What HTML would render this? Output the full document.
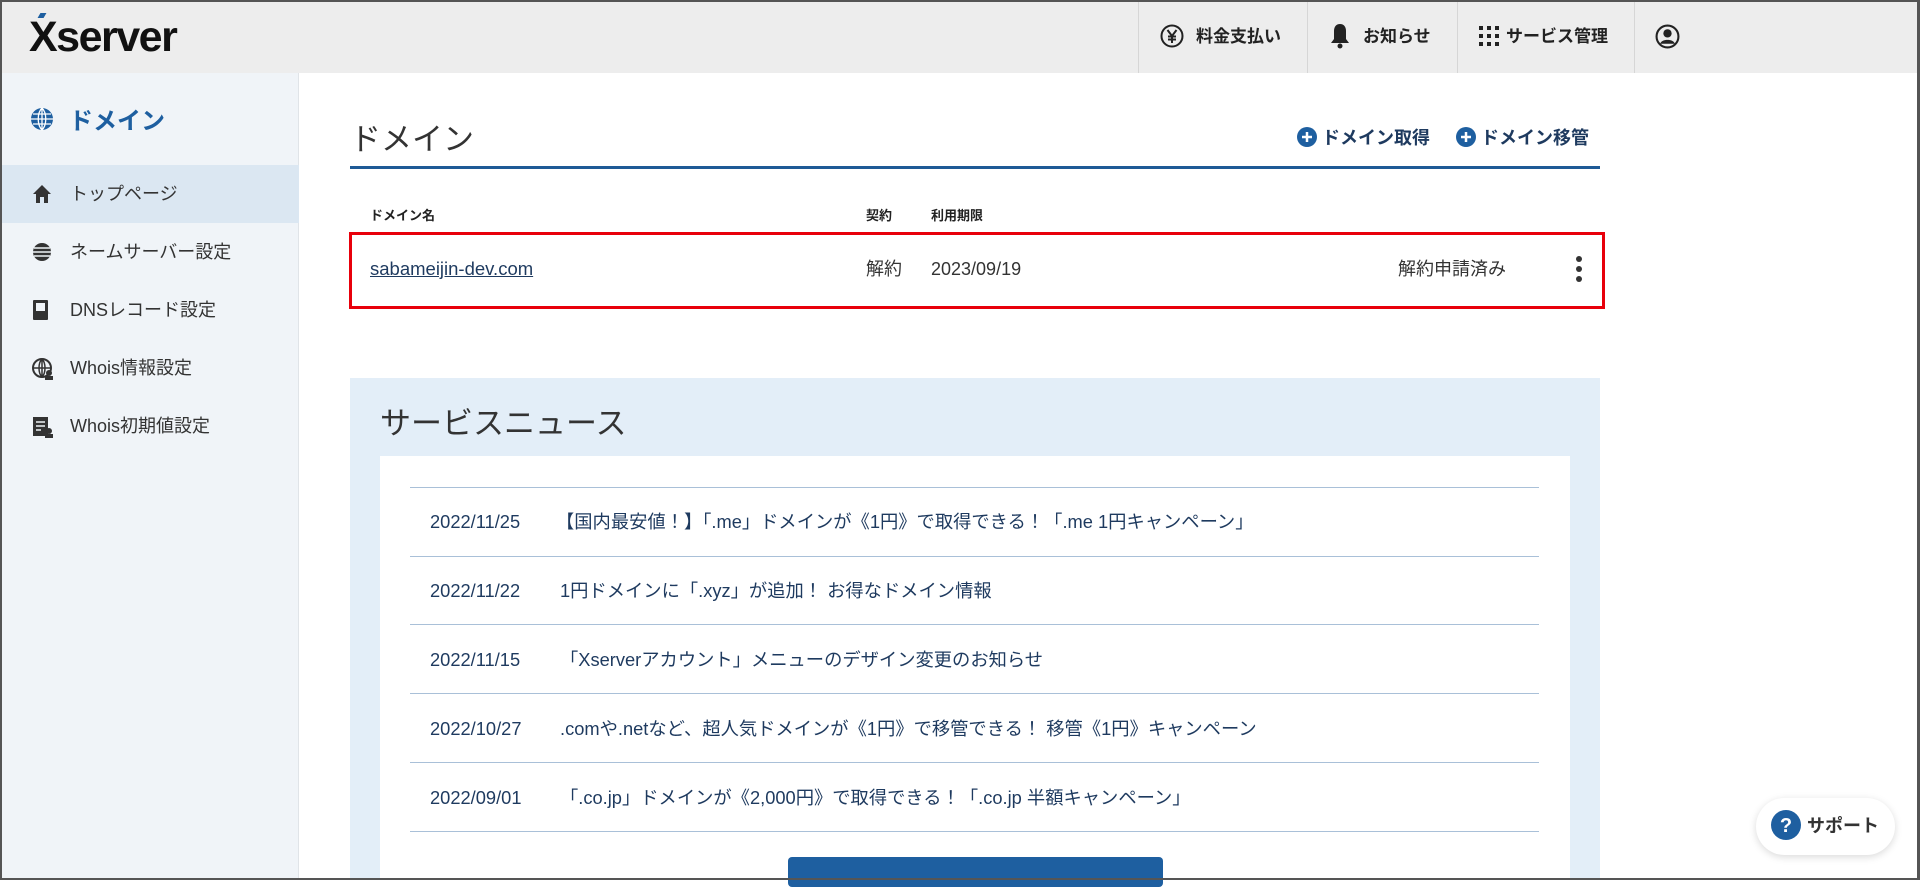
<!DOCTYPE html>
<html><head><meta charset="utf-8"><style>
*{margin:0;padding:0;box-sizing:border-box}
body{width:1920px;height:880px;overflow:hidden;background:#fff;font-family:"Liberation Sans","Noto Sans CJK JP",sans-serif;color:#333;position:relative}
.a{position:absolute;white-space:nowrap;line-height:24px}
#frame{position:absolute;left:0;top:0;width:1920px;height:880px;border:2px solid #555;border-right:3px solid #555;pointer-events:none;z-index:10}
#hdr{position:absolute;left:0;top:0;width:1920px;height:73px;background:#ededed}
.div{position:absolute;top:0;width:1px;height:73px;background:#d6d6d6}
.nav{font-size:17px;font-weight:bold;color:#222;top:25px}
#side{position:absolute;left:0;top:73px;width:299px;height:807px;background:#f0f4f8;border-right:1px solid #e0e4e8}
.it{position:absolute;left:0;width:299px;height:58px;font-size:18px;color:#333}
.it span{position:absolute;left:70px;top:17px;line-height:24px}
.it svg{position:absolute;left:32px;top:19px}
.nd{font-size:18.3px;color:#1e3a5f}
.ln{position:absolute;left:410px;width:1129px;height:1px;background:#a9c0d8}
</style></head><body>
<div id="hdr"></div>
<div class="a" style="left:29px;top:16px;font-size:43px;line-height:42px;font-weight:bold;color:#111;letter-spacing:-1.5px">Xserver</div>
<div class="a" style="left:39px;top:13px;width:6px;height:5px;background:#1e5fa0;transform:skewX(-30deg)"></div>
<div class="div" style="left:1138px"></div><div class="div" style="left:1307px"></div><div class="div" style="left:1457px"></div><div class="div" style="left:1634px"></div>
<svg class="a" style="left:1160px;top:24px" width="24" height="24" viewBox="0 0 24 24"><circle cx="12" cy="12" r="10.5" fill="none" stroke="#222" stroke-width="2"/><path d="M7.5 6l4.5 6 4.5-6M12 12v7M8 12.5h8M8 15.5h8" stroke="#222" stroke-width="2" fill="none"/></svg>
<div class="a nav" style="left:1196px">料金支払い</div>
<svg class="a" style="left:1330px;top:23px" width="20" height="26" viewBox="0 0 20 26"><path d="M10 1c-4 0-6 3-6 7v8l-3 4h18l-3-4V8c0-4-2-7-6-7z" fill="#222"/><circle cx="10" cy="23" r="2.5" fill="#222"/></svg>
<div class="a nav" style="left:1363px">お知らせ</div>
<svg class="a" style="left:1479px;top:26px" width="20" height="20" viewBox="0 0 20 20" fill="#222"><rect x="0" y="0" width="4" height="4"/><rect x="8" y="0" width="4" height="4"/><rect x="16" y="0" width="4" height="4"/><rect x="0" y="8" width="4" height="4"/><rect x="8" y="8" width="4" height="4"/><rect x="16" y="8" width="4" height="4"/><rect x="0" y="16" width="4" height="4"/><rect x="8" y="16" width="4" height="4"/><rect x="16" y="16" width="4" height="4"/></svg>
<div class="a nav" style="left:1506px">サービス管理</div>
<svg class="a" style="left:1655px;top:24px" width="25" height="25" viewBox="0 0 24 24"><circle cx="12" cy="12" r="10.5" fill="none" stroke="#222" stroke-width="2"/><circle cx="12" cy="9" r="4" fill="#222"/><path d="M5 19c1-5 13-5 14 0z" fill="#222"/></svg>

<div id="side">
<svg class="a" style="left:30px;top:34px" width="24" height="24" viewBox="0 0 24 24"><circle cx="12" cy="12" r="11" fill="#1e5fa0"/><path d="M12 1v22M1 12h22M3 7h18M3 17h18M12 1c-5 5-5 17 0 22M12 1c5 5 5 17 0 22" stroke="#fff" stroke-width="1.3" fill="none"/></svg>
<div class="a" style="left:69px;top:37px;font-size:24px;font-weight:bold;color:#1e5fa0">ドメイン</div>
<div class="it" style="top:92px;background:#dbe7f2"><svg width="20" height="20" viewBox="0 0 20 20"><path d="M10 1L1 10h3v9h4v-6h4v6h4v-9h3z" fill="#333"/></svg><span>トップページ</span></div>
<div class="it" style="top:150px"><svg width="20" height="20" viewBox="0 0 20 20"><circle cx="10" cy="10" r="9" fill="#333"/><path d="M1 10h18M2 6h16M2 14h16" stroke="#f0f4f8" stroke-width="1.5"/></svg><span>ネームサーバー設定</span></div>
<div class="it" style="top:208px"><svg width="18" height="20" viewBox="0 0 18 20"><rect x="1" y="0" width="15" height="20" rx="1" fill="#333"/><rect x="4" y="3" width="9" height="8" fill="#f0f4f8"/></svg><span>DNSレコード設定</span></div>
<div class="it" style="top:266px"><svg width="22" height="22" viewBox="0 0 22 22"><circle cx="10" cy="10" r="9" fill="none" stroke="#333" stroke-width="2"/><path d="M1 10h18M10 1v18M10 1c-4 4-4 14 0 18M10 1c4 4 4 14 0 18" stroke="#333" stroke-width="1.5" fill="none"/><circle cx="17" cy="15" r="3" fill="#333"/><rect x="13" y="18" width="8" height="4" fill="#333"/></svg><span>Whois情報設定</span></div>
<div class="it" style="top:324px"><svg width="22" height="22" viewBox="0 0 22 22"><rect x="1" y="1" width="15" height="19" fill="#333"/><path d="M4 6h9M4 10h9M4 14h5" stroke="#f0f4f8" stroke-width="1.5"/><circle cx="17" cy="15" r="3" fill="#333"/><rect x="13" y="18" width="8" height="4" fill="#333"/></svg><span>Whois初期値設定</span></div>
</div>

<div class="a" style="left:350px;top:122px;font-size:31px;line-height:36px;color:#333">ドメイン</div>
<svg class="a" style="left:1297px;top:127px" width="20" height="20"><circle cx="10" cy="10" r="10" fill="#1e5fa0"/><path d="M10 5v10M5 10h10" stroke="#fff" stroke-width="2.5"/></svg>
<div class="a" style="left:1322px;top:126px;font-size:18px;font-weight:bold;color:#1e3a5f">ドメイン取得</div>
<svg class="a" style="left:1456px;top:127px" width="20" height="20"><circle cx="10" cy="10" r="10" fill="#1e5fa0"/><path d="M10 5v10M5 10h10" stroke="#fff" stroke-width="2.5"/></svg>
<div class="a" style="left:1481px;top:126px;font-size:18px;font-weight:bold;color:#1e3a5f">ドメイン移管</div>
<div class="a" style="left:350px;top:166px;width:1250px;height:3px;background:#1e5a96"></div>
<div class="a" style="left:370px;top:204px;font-size:13px;font-weight:bold;color:#222">ドメイン名</div>
<div class="a" style="left:866px;top:204px;font-size:13px;font-weight:bold;color:#222">契約</div>
<div class="a" style="left:931px;top:204px;font-size:13px;font-weight:bold;color:#222">利用期限</div>
<div class="a" style="left:349px;top:232px;width:1256px;height:77px;border:3px solid #e8000b"></div>
<div class="a" style="left:370px;top:257px;font-size:18.5px;color:#1e3a5f;text-decoration:underline">sabameijin-dev.com</div>
<div class="a" style="left:866px;top:257px;font-size:18px;color:#333">解約</div>
<div class="a" style="left:931px;top:257px;font-size:18px;color:#333">2023/09/19</div>
<div class="a" style="left:1398px;top:257px;font-size:18px;color:#333">解約申請済み</div>
<svg class="a" style="left:1575px;top:255px" width="8" height="30"><circle cx="4" cy="4" r="3" fill="#333"/><circle cx="4" cy="14" r="3" fill="#333"/><circle cx="4" cy="24" r="3" fill="#333"/></svg>

<div class="a" style="left:350px;top:378px;width:1250px;height:502px;background:#e3eef8"></div>
<div class="a" style="left:380px;top:406px;font-size:31px;line-height:36px;color:#333">サービスニュース</div>
<div class="a" style="left:380px;top:456px;width:1190px;height:424px;background:#fff"></div>
<div class="ln" style="top:487px"></div><div class="ln" style="top:556px"></div><div class="ln" style="top:624px"></div><div class="ln" style="top:693px"></div><div class="ln" style="top:762px"></div><div class="ln" style="top:831px"></div>
<div class="a nd" style="left:430px;top:510px">2022/11/25</div><div class="a nd" style="left:556px;top:510px">【国内最安値！】「.me」ドメインが《1円》で取得できる！「.me 1円キャンペーン」</div>
<div class="a nd" style="left:430px;top:579px">2022/11/22</div><div class="a nd" style="left:560px;top:579px">1円ドメインに「.xyz」が追加！ お得なドメイン情報</div>
<div class="a nd" style="left:430px;top:648px">2022/11/15</div><div class="a nd" style="left:560px;top:648px">「Xserverアカウント」メニューのデザイン変更のお知らせ</div>
<div class="a nd" style="left:430px;top:717px">2022/10/27</div><div class="a nd" style="left:560px;top:717px">.comや.netなど、超人気ドメインが《1円》で移管できる！ 移管《1円》キャンペーン</div>
<div class="a nd" style="left:430px;top:786px">2022/09/01</div><div class="a nd" style="left:560px;top:786px">「.co.jp」ドメインが《2,000円》で取得できる！「.co.jp 半額キャンペーン」</div>
<div class="a" style="left:788px;top:857px;width:375px;height:30px;background:#1e5fa0;border-radius:4px"></div>

<div class="a" style="left:1756px;top:798px;width:139px;height:57px;background:#fff;border-radius:29px;box-shadow:0 2px 8px rgba(0,0,0,.15)"></div>
<svg class="a" style="left:1771px;top:810px" width="30" height="30"><circle cx="15" cy="15" r="15" fill="#1e5fa0"/><text x="15" y="22" text-anchor="middle" font-family="Liberation Sans" font-weight="bold" font-size="20" fill="#fff">?</text></svg>
<div class="a" style="left:1807px;top:814px;font-size:18px;font-weight:bold;color:#333">サポート</div>
<div id="frame"></div>
</body></html>
